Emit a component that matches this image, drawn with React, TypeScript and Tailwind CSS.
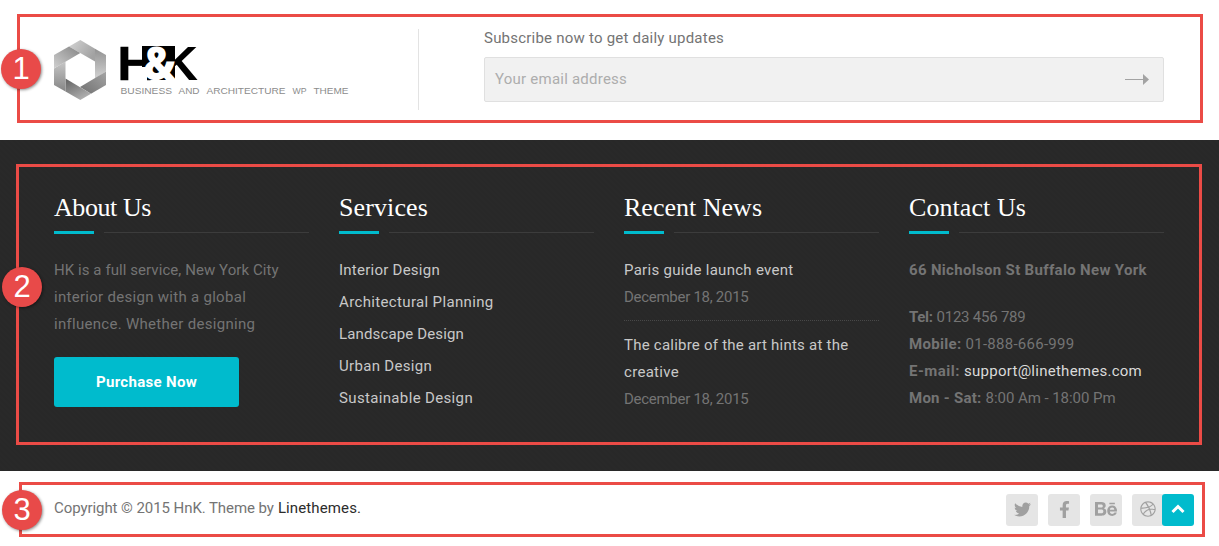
import type { ReactNode } from "react";
import { FaBehance, FaDribbble, FaFacebookF, FaTwitter } from "react-icons/fa";

function Logo() {
  return (
    <svg width="300" height="70" viewBox="50 35 300 70" role="img" aria-label="H&K">
      <defs>
        <linearGradient id="a" x1="0" y1="0" x2="1" y2="0.6">
          <stop offset="0" stopColor="#d4d4d4" />
          <stop offset="1" stopColor="#a2a2a2" />
        </linearGradient>
        <linearGradient id="b" x1="0" y1="0" x2="0" y2="1">
          <stop offset="0" stopColor="#929292" />
          <stop offset="1" stopColor="#d2d2d2" />
        </linearGradient>
        <linearGradient id="c" x1="1" y1="0" x2="0" y2="1">
          <stop offset="0" stopColor="#a4a4a4" />
          <stop offset="1" stopColor="#707070" />
        </linearGradient>
        <linearGradient id="d" x1="0" y1="0" x2="0.6" y2="1">
          <stop offset="0" stopColor="#606060" />
          <stop offset="1" stopColor="#b0b0b0" />
        </linearGradient>
        <linearGradient id="e" x1="0" y1="0" x2="0" y2="1">
          <stop offset="0" stopColor="#c6c6c6" />
          <stop offset="1" stopColor="#858585" />
        </linearGradient>
        <linearGradient id="f" x1="0" y1="1" x2="1" y2="0">
          <stop offset="0" stopColor="#d0d0d0" />
          <stop offset="1" stopColor="#858585" />
        </linearGradient>
      </defs>
      <polygon points="69,46.5 80.3,40 95,48.7 95,61.5" fill="url(#a)" />
      <polygon points="95,48.7 106,55 106,71.5 95,78.5" fill="url(#b)" />
      <polygon points="106,71.5 106,85 91,93.7 80,87" fill="url(#c)" />
      <polygon points="65.5,78.5 91,93.7 80.3,100 65.5,91.5" fill="url(#d)" />
      <polygon points="54,68.5 65.5,61.5 65.5,91.5 54,85" fill="url(#e)" />
      <polygon points="54,68.5 54,55 69,46.5 80.3,53" fill="url(#f)" />
      <g fontFamily="Liberation Sans, sans-serif" fontWeight="700" fontSize="49">
        <text x="117.5" y="80" textLength="36" lengthAdjust="spacingAndGlyphs" stroke="#000" strokeWidth="0.6">H</text>
        <rect x="142" y="46" width="33" height="34" />
        <text x="162" y="80" textLength="36" lengthAdjust="spacingAndGlyphs">K</text>
        <rect x="141" y="67" width="6" height="14" fill="#fff" />
        <text x="143" y="79.5" fontFamily="Open Sans, sans-serif" fontWeight="800" fontSize="46" fill="#fff" textLength="33" lengthAdjust="spacingAndGlyphs">&amp;</text>
      </g>
      <g fontFamily="Liberation Sans, sans-serif" fontSize="8.5" fill="#8c8c8c">
        <text x="120.5" y="94" textLength="51.5" lengthAdjust="spacingAndGlyphs">BUSINESS</text>
        <text x="178.5" y="94" textLength="21" lengthAdjust="spacingAndGlyphs">AND</text>
        <text x="206.5" y="94" textLength="79" lengthAdjust="spacingAndGlyphs">ARCHITECTURE</text>
        <text x="292.5" y="94" textLength="14" lengthAdjust="spacingAndGlyphs">WP</text>
        <text x="313.5" y="94" textLength="35" lengthAdjust="spacingAndGlyphs">THEME</text>
      </g>
    </svg>
  );
}

function Column({ title, tracking, children }: { title: string; tracking: string; children: ReactNode }) {
  return (
    <section className="w-[255px]">
      <h2 className={`h-[37px] font-['Liberation_Serif',serif] text-[26px] leading-[28px] whitespace-nowrap text-white ${tracking}`}>{title}</h2>
      <div className="flex h-[3px] items-center gap-2.5">
        <span className="h-[3px] w-10 bg-[#00bbcd]" />
        <span className="h-px flex-1 bg-[#3c3c3c]" />
      </div>
      <div className="pt-[23px] leading-[27px] whitespace-nowrap">{children}</div>
    </section>
  );
}

function Contact({ label, labelClass, value, valueClass }: { label: string; labelClass: string; value: string; valueClass: string }) {
  return (
    <p className="flex gap-[4px]">
      <strong className={labelClass}>{label}</strong>
      <span className={valueClass}>{value}</span>
    </p>
  );
}

function Callout({ n, frame, badge }: { n: number; frame: string; badge: string }) {
  return (
    <>
      <div className={`pointer-events-none absolute border-[3px] border-[#eb4b46] ${frame}`} />
      <div className={`absolute flex size-10 items-center justify-center rounded-full bg-[#e84a49] font-['Liberation_Sans',sans-serif] text-[31px] leading-none text-white shadow-[1px_1px_3px_rgba(0,0,0,0.45)] ${badge}`}>
        <span className="-translate-y-px">{n}</span>
      </div>
    </>
  );
}

const social = "flex size-8 items-center justify-center rounded-[3px] bg-[#e5e5e5] text-[#a0a0a0]";

export default function App() {
  return (
    <div className="relative h-[546px] w-[1219px] overflow-hidden bg-white font-['Roboto',sans-serif] text-[15px] text-[#747474]">
      <header className="flex h-[140px] pl-[50px]">
        <div className="w-[368px] pt-[35px]"><Logo /></div>
        <div className="mt-[29px] h-[81px] w-px bg-[#e3e3e3]" />
        <div className="ml-[65px] w-[680px] pt-[25px]">
          <label className="block h-8 leading-[27px] tracking-[0.22px]">Subscribe now to get daily updates</label>
          <div className="flex h-[45px] items-center justify-between rounded-[2px] border border-[#e0e0e0] bg-[#f1f1f1] pr-[14px] pl-2.5">
            <span className="tracking-[0.23px] text-[#adadad]">Your email address</span>
            <svg width="24" height="12" viewBox="0 0 24 12" fill="#a3a3a3">
              <rect y="5" width="19" height="1" />
              <path d="M18 0l6 5.5-6 5.5z" />
            </svg>
          </div>
        </div>
      </header>

      <main className="flex h-[331px] gap-[30px] bg-[#282828] bg-[repeating-linear-gradient(45deg,#292929_0px,#292929_2px,#282828_2px,#282828_4px)] pt-[54px] pl-[54px]">
        <Column title="About Us" tracking="tracking-[-0.42px]">
          <p className="tracking-[0.07px]">HK is a full service, New York City</p>
          <p className="tracking-[0.29px]">interior design with a global</p>
          <p className="tracking-[0.29px]">influence. Whether designing</p>
          <button className="mt-[19px] block h-[50px] w-[185px] rounded-[3px] bg-[#00bbcd] font-bold tracking-[0.31px] text-white">Purchase Now</button>
        </Column>
        <Column title="Services" tracking="tracking-[0.11px]">
          <ul className="flex flex-col gap-[5px] text-[#c8c8c8]">
            <li className="tracking-[0.25px]">Interior Design</li>
            <li className="tracking-[0.35px]">Architectural Planning</li>
            <li className="tracking-[0.14px]">Landscape Design</li>
            <li className="tracking-[0.31px]">Urban Design</li>
            <li className="tracking-[0.35px]">Sustainable Design</li>
          </ul>
        </Column>
        <Column title="Recent News" tracking="tracking-[0.01px]">
          <div className="h-[64px] border-b border-dotted border-[#484848]">
            <p className="tracking-[0.29px] text-[#c8c8c8]">Paris guide launch event</p>
            <p className="tracking-[-0.28px]">December 18, 2015</p>
          </div>
          <div className="pt-[11px]">
            <p className="tracking-[0.23px] text-[#c8c8c8]">The calibre of the art hints at the</p>
            <p className="tracking-[0.3px] text-[#c8c8c8]">creative</p>
            <p className="tracking-[-0.28px]">December 18, 2015</p>
          </div>
        </Column>
        <Column title="Contact Us" tracking="tracking-[0.07px]">
          <p className="mb-5 font-bold tracking-[0.32px]">66 Nicholson St Buffalo New York</p>
          <Contact label="Tel:" labelClass="tracking-[-0.35px]" value="0123 456 789" valueClass="tracking-[-0.23px]" />
          <Contact label="Mobile:" labelClass="tracking-[0.31px]" value="01-888-666-999" valueClass="tracking-[0.27px]" />
          <Contact label="E-mail:" labelClass="tracking-[0.5px]" value="support@linethemes.com" valueClass="tracking-[0.26px] text-[#dadada]" />
          <Contact label="Mon - Sat:" labelClass="tracking-[0.26px]" value="8:00 Am - 18:00 Pm" valueClass="tracking-[-0.05px]" />
        </Column>
      </main>

      <footer className="flex h-[75px] items-start justify-between pt-[23px] pr-[55px] pl-[54px]">
        <p className="flex gap-[4px] leading-[28px]">
          <span className="tracking-[-0.07px]">Copyright © 2015 HnK. Theme by</span>
          <a className="tracking-[0.12px] text-[#2c2c2c]">Linethemes.</a>
        </p>
        <div className="flex gap-2.5">
          <span className={social}><FaTwitter size={17} className="-translate-y-px" /></span>
          <span className={social}><FaFacebookF size={17} className="-translate-y-px" /></span>
          <span className={social}><FaBehance size={22} className="-translate-y-px" /></span>
          <span className={social}><FaDribbble size={16} className="-translate-y-px" /></span>
        </div>
      </footer>
      <button className="absolute top-[494px] left-[1162px] flex size-8 items-center justify-center rounded-[3px] bg-[#00bbcd] text-white">
        <svg width="14" height="10" viewBox="0 0 14 10" fill="none" stroke="currentColor" strokeWidth="3" className="-translate-y-px">
          <path d="M1.5 8L7 2.5 12.5 8" />
        </svg>
      </button>

      <Callout n={1} frame="top-[14px] left-[17px] h-[109px] w-[1186px]" badge="top-[49px] left-[1px]" />
      <Callout n={2} frame="top-[164px] left-[16px] h-[281px] w-[1186px]" badge="top-[267px] left-[2px]" />
      <Callout n={3} frame="top-[482px] left-[19px] h-[55px] w-[1186px]" badge="top-[490px] left-[2px]" />
    </div>
  );
}
